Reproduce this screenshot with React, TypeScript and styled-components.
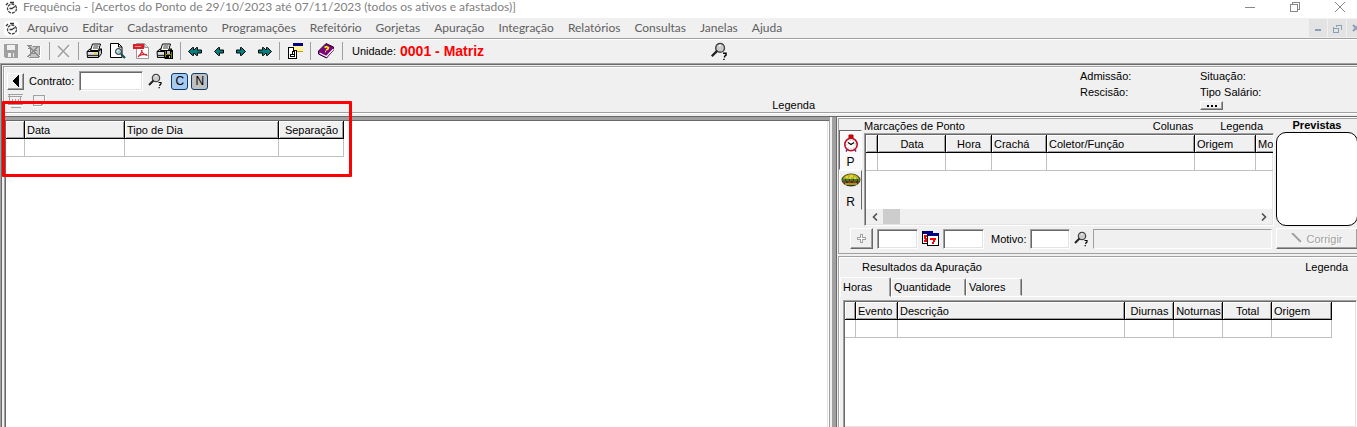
import React from "react";
import styled, { createGlobalStyle, css } from "styled-components";

const face = "#f0f0f0";
const mid = "#a0a0a0";
const dark = "#696969";
const line = "#c0c0c0";

const Global = createGlobalStyle`
  * { box-sizing: border-box; }
  body {
    margin: 0;
    background: ${face};
    color: #000;
    font: 11px/14px "Liberation Sans", Arial, sans-serif;
  }
  button, input { font: inherit; color: inherit; padding: 0; margin: 0; border-radius: 0; }
  svg { display: block; flex: none; }
`;

const Page = styled.div`
  position: relative;
  display: flex;
  flex-direction: column;
  min-height: 100vh;
  overflow: hidden;
`;

const TitleBar = styled.header`
  display: flex;
  align-items: center;
  height: 18px;
  padding: 0 9px 4px 4px;
  gap: 4px;
  background: #fff;
  color: #808080;
  font: 12px/14px Lato, "Noto Sans", sans-serif;
`;

const Title = styled.h1`
  flex: 1;
  margin: 0;
  font: inherit;
  white-space: nowrap;
`;

const WindowButtons = styled.div`
  display: flex;
  gap: 29px;
`;

const PlainButton = styled.button`
  display: flex;
  align-items: center;
  justify-content: center;
  border: 0;
  background: none;
`;

const MenuBar = styled.nav`
  display: flex;
  align-items: center;
  height: 20px;
  padding-left: 4px;
  background: ${face};
  color: #606060;
  font: 12px/18px Lato, "Noto Sans", sans-serif;
`;

const MenuItems = styled.div`
  display: flex;
  flex: 1;
  gap: 14px;
  padding-left: 8px;
`;

const ChildButtons = styled.div`
  display: flex;
  gap: 1px;
  width: 48px;
  overflow: hidden;
`;

const ChildButton = styled(PlainButton)`
  flex: none;
  width: 18px;
  height: 18px;
  background: #e3e3e3;
`;

const ToolBar = styled.div`
  display: flex;
  align-items: center;
  height: 25px;
  border-top: 1px solid ${mid};
  box-shadow: inset 0 1px #fff;
  padding-left: 3px;
  gap: 7px;
`;

const ToolSep = styled.span`
  width: 1px;
  height: 18px;
  background: ${mid};
`;

const Unit = styled.div`
  display: flex;
  align-items: center;
  gap: 4px;
  width: 353px;
  padding-left: 2px;
`;

const UnitName = styled.strong`
  color: #f00;
  font-size: 14px;
`;

const Workspace = styled.main`
  flex: 1;
  display: flex;
  flex-direction: column;
  border-top: 1px solid ${mid};
  border-left: 1px solid ${mid};
  box-shadow: inset 1px 1px ${dark};
  padding: 2px 0 0 2px;
`;

const ContractPanel = styled.section`
  display: flex;
  height: 47px;
  border: 1px solid ${mid};
  border-right: 0;
  box-shadow: inset 1px 1px #fff, 0 1px #fff;
`;

const ContractTools = styled.div`
  flex: 1;
  display: flex;
  justify-content: space-between;
  align-items: flex-end;
  padding-left: 3px;
`;

const ContractRows = styled.div`
  display: flex;
  flex-direction: column;
  height: 100%;
  padding-top: 4px;
  gap: 1px;
`;

const Row = styled.div<{ $gap?: number }>`
  display: flex;
  align-items: center;
  gap: ${(p) => p.$gap ?? 5}px;
`;

const raised = css`
  border: 1px solid;
  border-color: #fff ${dark} ${dark} #fff;
  box-shadow: inset -1px -1px ${mid};
  background: ${face};
`;

const RaisedButton = styled.button<{ $w: number; $h: number }>`
  ${raised}
  display: flex;
  flex: none;
  align-items: center;
  justify-content: center;
  gap: 3px;
  width: ${(p) => p.$w}px;
  height: ${(p) => p.$h}px;
  &:disabled { color: ${mid}; text-shadow: 1px 1px #fff; }
`;

const Field = styled.input<{ $w: number }>`
  width: ${(p) => p.$w}px;
  height: 20px;
  border: 1px solid;
  border-color: ${mid} #fff #fff ${mid};
  box-shadow: inset 1px 1px ${dark}, inset -1px -1px #e3e3e3;
  background: #fff;
  &:disabled { box-shadow: none; background: ${face}; }
`;

const Toggle = styled.button<{ $on?: boolean }>`
  width: 17px;
  height: 17px;
  border: 1px solid #0b3a6b;
  border-radius: 3px;
  background: ${(p) => (p.$on ? "#a6caf0" : "#c0c0c0")};
  font-size: 12px;
  line-height: 14px;
`;

const Toggles = styled.div`
  display: flex;
  gap: 3px;
  padding-left: 3px;
`;

const ContractInfo = styled.dl`
  display: grid;
  grid-template-columns: 120px 1fr;
  grid-auto-rows: 16px;
  align-content: start;
  width: 542px;
  margin: 0;
  padding: 2px 0 0 265px;
`;

const InfoName = styled.dt``;

const InfoMore = styled.dd`
  grid-column: 2;
  margin: 0;
`;

const Split = styled.div`
  flex: 1;
  display: grid;
  grid-template-columns: minmax(0, 1fr) 527px;
  margin: 3px 0 0 -2px;
  border-top: 1px solid ${dark};
`;

const DaysPane = styled.section`
  border: solid;
  border-width: 3px 1px 0 1px;
  border-color: ${mid};
  margin-left: 3px;
  box-shadow: inset 1px 1px ${dark}, inset -1px 0 #fff, inset -2px 0 #e3e3e3;
  padding: 1px 3px 0 1px;
  background: #fff;
`;

const RightPane = styled.section`
  display: flex;
  flex-direction: column;
  margin-left: 2px;
  border-left: 4px solid ${mid};
  box-shadow: inset 1px 0 ${dark}, inset 0 1px #fff;
  min-width: 0;
`;

const Punches = styled.section`
  display: flex;
  flex-direction: column;
  margin-left: 2px;
  margin-top: 1px;
  border: 1px solid ${mid};
  border-right: 0;
  height: 136px;
`;

const PunchArea = styled.div`
  display: flex;
`;

const SideTabs = styled.div`
  width: 25px;
  padding-top: 11px;
`;

const SideTab = styled.button<{ $on?: boolean }>`
  display: flex;
  flex-direction: column;
  align-items: center;
  justify-content: space-between;
  width: 23px;
  height: 40px;
  border: 1px solid;
  border-color: ${(p) => (p.$on ? `${dark} #fff #fff ${dark}` : `#fff ${dark} ${face} #fff`)};
  background: ${(p) => (p.$on ? "#fafafa" : face)};
  padding-top: ${(p) => (p.$on ? 3 : 1)}px;
  font-size: 12px;
`;

const PunchMain = styled.div`
  flex: 1;
  min-width: 0;
`;

const Labels = styled.div`
  display: flex;
  gap: 27px;
  height: 14px;
  padding-right: 11px;
`;

const Grow = styled.span`
  flex: 1;
`;

const GridFrame = styled.div`
  display: flex;
  flex-direction: column;
  overflow: hidden;
  border: 1px solid;
  border-color: ${mid} #fff #fff ${mid};
  box-shadow: inset 1px 1px ${dark}, inset -1px -1px #e3e3e3;
  padding: 1px;
  background: #fff;
`;

const PunchGrid = styled(GridFrame)`
  height: 93px;
`;

const Table = styled.table<{ $w: number }>`
  width: ${(p) => p.$w}px;
  table-layout: fixed;
  border-collapse: separate;
  border-spacing: 0;
`;

const Head = styled.th<{ $align?: string }>`
  height: 18px;
  padding: 0 1px 0 2px;
  border-right: 1px solid #000;
  border-bottom: 1px solid #000;
  box-shadow: inset 1px 1px #fff, inset -1px -1px ${mid};
  background: ${face};
  font-weight: normal;
  text-align: ${(p) => p.$align ?? "left"};
  white-space: nowrap;
`;

const Cell = styled.td`
  height: 18px;
  padding: 0;
  border-right: 1px solid ${line};
  border-bottom: 1px solid ${line};
`;

const ScrollBar = styled.div`
  display: flex;
  align-items: center;
  height: 15px;
  margin-top: auto;
  background: ${face};
`;

const ScrollButton = styled(PlainButton)`
  width: 17px;
  height: 15px;
`;

const Thumb = styled.div`
  width: 17px;
  height: 15px;
  margin-right: auto;
  background: #cdcdcd;
`;

const Planned = styled.div`
  width: 82px;
  margin: 0 -1px 0 2px;
  font-weight: bold;
  line-height: 13px;
  text-align: center;
`;

const PlannedBox = styled.div`
  height: 94px;
  border: 1px solid #000;
  border-radius: 10px;
  background: #fff;
`;

const PunchForm = styled.form`
  display: flex;
  align-items: center;
  gap: 4px;
  padding: 2px 0 0 11px;
  margin-right: -1px;
`;

const Reason = styled.label`
  display: flex;
  align-items: center;
  gap: 4px;
  padding-left: 3px;
`;

const ReasonText = styled(Field)`
  flex: 1;
  min-width: 0;
`;

const Results = styled.section`
  flex: 1;
  display: flex;
  flex-direction: column;
  margin: 2px 0 0 2px;
  border: 1px solid ${mid};
  border-width: 1px 0 0 1px;
  box-shadow: inset 1px 1px #fff;
`;

const ResultLabels = styled.div`
  display: flex;
  justify-content: space-between;
  padding: 3px 9px 1px 23px;
`;

const TabList = styled.div`
  display: flex;
  align-items: flex-end;
  height: 22px;
  margin-left: 1px;
  border-bottom: 1px solid #fff;
`;

const Tab = styled.button<{ $on?: boolean; $w: number }>`
  width: ${(p) => p.$w}px;
  height: ${(p) => (p.$on ? 20 : 18)}px;
  margin-bottom: ${(p) => (p.$on ? -1 : 0)}px;
  padding: 0 0 ${(p) => (p.$on ? 1 : 0)}px 2px;
  border: 1px solid;
  border-color: #fff ${dark} ${face} #fff;
  border-radius: 2px 2px 0 0;
  box-shadow: inset -1px 0 ${mid};
  background: ${face};
  text-align: left;
`;

const ResultGrid = styled(GridFrame)`
  flex: 1;
  margin: 3px 0 0 4px;
  border-bottom: 0;
`;

const Highlight = styled.div`
  position: absolute;
  left: 2px;
  top: 101px;
  width: 350px;
  height: 76px;
  border: 3px solid #f00;
  border-radius: 1px;
  pointer-events: none;
`;

function Icon({ w = 16, h = 16, children }: { w?: number; h?: number; children: React.ReactNode }) {
  return (
    <svg width={w} height={h} viewBox={`0 0 ${w} ${h}`} fill="none" shapeRendering="crispEdges" aria-hidden="true">
      {children}
    </svg>
  );
}

const AppIcon = () => (
  <svg width="15" height="15" viewBox="0 0 15 15" fill="none" aria-hidden="true">
    <rect width="15" height="15" rx="4" fill="#fff" />
    <circle cx="8" cy="8.500" r="4.500" stroke="#444" strokeWidth="1.300" strokeDasharray="3 1" />
    <path d="M2 5l2-2M6 2.500h4M8 8.500l3-2M5.500 8.500h3" stroke="#333" strokeWidth="1.300" />
  </svg>
);

const Save = () => (
  <Icon>
    <path d="M1 1h14v14H2l-1-1z" fill={mid} />
    <path d="M4 2h8v5H4z" fill={face} />
    <path d="M5 10h3v4H5zM10 10h1v4h-1z" fill={face} />
  </Icon>
);

const Discard = () => (
  <Icon>
    <path d="M4 3h9v11H4z" fill="#c4c4c4" />
    <path d="M1 2h5M2 5h3M3 14h10M13 3v9M7 3h4M6 7h5M5 10h5M4 4v9" stroke="#8d8d8d" />
    <path d="M2 2l11 12M12 3L2 14" stroke="#8d8d8d" strokeWidth="1.500" />
    <path d="M14 4v11H5" stroke="#fff" />
  </Icon>
);

const Delete = () => (
  <svg width="14" height="14" viewBox="0 0 14 14" fill="none" aria-hidden="true">
    <path d="M2 3l11 11M13 2L3 14" stroke="#fff" />
    <path d="M1 2l11 11M12 1L1 13" stroke={mid} strokeWidth="1.500" />
  </svg>
);

const Printer = ({ disk }: { disk?: boolean }) => (
  <svg width="17" height="16" viewBox="0 0 17 16" fill="none" aria-hidden="true">
    <path d="M1 8.500L4 6h11.500v4.500l-3 4h-11z" fill="#c0c0c0" stroke="#000" />
    <path d="M6.500 1h8l-2 6.500h-8z" fill="#fff" stroke="#000" />
    <path d="M7.500 3h5M7 5h5" stroke="#000" strokeWidth=".8" />
    <path d="M1 8.500h11.500M12.500 14V8.500l3-2.500" stroke="#000" />
    <path d="M2 10h10" stroke="#fff" />
    <path d="M2 12.500h10" stroke="#333" />
    <path d="M8 10.500h3" stroke="#e0d000" strokeWidth="1.500" />
    {disk && (
      <>
        <path d="M8 7h9v9H9l-1-1z" fill="#000" />
        <path d="M9 8h1v6H9zM15 9h1v6h-1zM10 11h5v1h-5z" fill="#808000" />
        <path d="M11 8h3v3h-3zM13 13h1v2h-1z" fill="#c0c0c0" />
      </>
    )}
  </svg>
);

const Preview = () => (
  <svg width="16" height="16" viewBox="0 0 16 16" fill="none" aria-hidden="true">
    <path d="M.5.5h8l3.500 3.500v10.500H.5z" fill="#fff" stroke="#000" />
    <path d="M8.500.5V4H12" stroke="#000" />
    <circle cx="8.500" cy="8.500" r="3" fill="#a0ccd4" stroke="#222" />
    <path d="M7 8.500c0-1 .5-1.500 1.500-1.500" stroke="#fff" />
    <path d="M11 11l4 4" stroke="#104858" strokeWidth="2.200" />
  </svg>
);

const Pdf = () => (
  <svg width="16" height="16" viewBox="0 0 16 16" fill="none" aria-hidden="true">
    <path d="M3.500.5h8l4 4v11h-12z" fill="#fff" stroke="#999" />
    <path d="M11.500.5v4h4" fill="#ddd" stroke="#999" />
    <path d="M0 1h11v5H0z" fill="#d6202a" />
    <path d="M2 3.500h6" stroke="#f09090" />
    <path d="M5 14c2-2 4-4 4-7M8.500 7c.5 3 2.500 5 6 5.500M5.500 13c2-1.500 5-2 8.500-1.500" stroke="#d6202a" strokeWidth="1.200" />
  </svg>
);

const Arrow = ({ right, twice }: { right?: boolean; twice?: boolean }) => (
  <svg width={twice ? 14 : 10} height="11" viewBox={twice ? "0 0 14 11" : "0 0 10 11"} aria-hidden="true">
    <g transform={right ? `translate(${twice ? 14 : 10} 0) scale(-1 1)` : undefined} fill="#008080" stroke="#000">
      {twice && <path d="M4.500 5.500l4-4h1v2.500h4v3h-4v2.500h-1z" />}
      <path d={twice ? "M.5 5.500l4-4h1v8h-1z" : "M.5 5.500l4-4h1v2.500h4v3h-4v2.500h-1z"} />
      {twice && <path d="M5 4h2v3H5z" stroke="none" />}
    </g>
  </svg>
);

const Forms = () => (
  <Icon>
    <path d="M6 1h10v8H6z" fill="#fff3a0" />
    <path d="M6 0h10v3H6z" fill="#000080" />
    <path d="M7 8h9v1H7z" fill="#c8a000" />
    <path d="M1 4h6v3h3v9H1z" fill="#000" />
    <path d="M2 5h4v3h3v7H2z" fill="#fff" />
    <path d="M5 8h3v4H5zM3 11h5v3H3z" fill="#000" />
    <path d="M6 9h1v2H6zM4 12h3v1H4z" fill="#fff" />
  </Icon>
);

const Book = () => (
  <svg width="17" height="16" viewBox="0 0 17 16" aria-hidden="true">
    <path d="M8 .5L15.500 4v3L8.500 15 .5 11V8z" fill="#800080" stroke="#2a002a" />
    <path d="M1.500 10l7 3.500 7-7.500" stroke="#fff" strokeWidth="1.200" fill="none" />
    <path d="M6.500 4.500l2-1 2 1-.5 1.500-2 1M7 8.500h1" stroke="#ff0" strokeWidth="1.400" fill="none" />
  </svg>
);

const Lookup = ({ big }: { big?: boolean }) => (
  <svg width={big ? 19 : 15} height={big ? 19 : 16} viewBox="0 0 15 16" fill="none" aria-hidden="true">
    <circle cx="8" cy="5" r="3.700" fill="#ccc" stroke="#444" strokeWidth="1.200" />
    <path d="M7 3.500l1.500-1" stroke="#fff" strokeWidth="1.200" />
    <path d="M5.500 7.500L1 12" stroke="#222" strokeWidth="2" />
    <path d="M10.500 9.500h2.500v1.500l-1.200 1v1M11.200 14v1.200" stroke="#000" strokeWidth="1.200" />
  </svg>
);

const Keyboard = () => (
  <Icon>
    <path d="M1 2.500h15M1 4.500h14M1 12.500h15M2.500 2v12M5.500 7v5M8.500 7v5M11.500 7v5M13.500 5v7M3 9.500h2M4 15h10" stroke={mid} />
    <path d="M2 13.500h14" stroke="#fff" />
  </Icon>
);

const Note = () => (
  <Icon w={13} h={13}>
    <path d="M.5 1.500h11v7l-3 3h-8zM8.500 11V8.500H11" stroke={mid} />
    <path d="M1 12.500h9M12.500 2v8" stroke="#fff" />
  </Icon>
);

const Clock = () => (
  <svg width="16" height="19" viewBox="0 0 16 19" fill="none" aria-hidden="true">
    <path d="M6 1h4v3H6z" fill="#d00" stroke="#b00000" />
    <circle cx="8" cy="10.500" r="6.200" fill="#fff" stroke="#c01020" strokeWidth="1.600" />
    <circle cx="8" cy="10.500" r="4.200" stroke="#88a0a0" strokeDasharray="1 2" />
    <path d="M5 8.500l3 2 3-2" stroke="#000" strokeWidth="1.200" />
    <path d="M4 16l-1 1.500M12 16l1 1.500" stroke="#602080" strokeWidth="1.500" />
  </svg>
);

const Burger = () => (
  <svg width="20" height="16" viewBox="0 0 20 16" fill="none" aria-hidden="true">
    <ellipse cx="10" cy="8" rx="9.500" ry="6.500" fill="#383818" />
    <path d="M2 7c1-6.500 15-6.500 16 0z" fill="#c0b020" />
    <path d="M5 5h2M9 4h3M13 6h2M8 6h2" stroke="#ffff60" />
    <path d="M1 8h18" stroke="#30a030" strokeWidth="1.500" strokeDasharray="3 1" />
    <path d="M2 10h16" stroke="#c03020" strokeWidth="1.500" strokeDasharray="3 2" />
    <path d="M4 12h12" stroke="#c0b830" strokeWidth="1.500" />
  </svg>
);

const Calendar = () => (
  <Icon w={17} h={17}>
    <path d="M.5 1.500h10v12H.5z" fill="#fff" stroke="#000" />
    <path d="M1 1h10v3H1z" fill="#000080" />
    <path d="M2 5h3v2H4v1h1v4H2v-2h1V9H2z" fill="#f00" />
    <path d="M5.500 3.500h11v12h-11z" fill="#fff" stroke="#000" />
    <path d="M5 3h12v3H5z" fill="#000080" />
    <path d="M8 8h6v2h-1v2h-1v2h-2v-2h1v-2H8z" fill="#f00" />
  </Icon>
);

type Column = { name: string; w: number; align?: string };

function DataTable({ columns, label }: { columns: Column[]; label: string }) {
  return (
    <Table aria-label={label} $w={columns.reduce((sum, c) => sum + c.w, 0)}>
      <colgroup>
        {columns.map((c, i) => <col key={i} width={c.w} />)}
      </colgroup>
      <thead>
        <tr>{columns.map((c, i) => <Head key={i} scope="col" $align={c.align}>{c.name}</Head>)}</tr>
      </thead>
      <tbody>
        <tr>{columns.map((_, i) => <Cell key={i} />)}</tr>
      </tbody>
    </Table>
  );
}

const menus = ["Arquivo", "Editar", "Cadastramento", "Programações", "Refeitório", "Gorjetas", "Apuração", "Integração", "Relatórios", "Consultas", "Janelas", "Ajuda"];

const dayColumns: Column[] = [
  { name: "", w: 19 },
  { name: "Data", w: 100 },
  { name: "Tipo de Dia", w: 154 },
  { name: "Separação", w: 65, align: "center" },
];

const punchColumns: Column[] = [
  { name: "", w: 12 },
  { name: "Data", w: 68, align: "center" },
  { name: "Hora", w: 46, align: "center" },
  { name: "Crachá", w: 55 },
  { name: "Coletor/Função", w: 148 },
  { name: "Origem", w: 61 },
  { name: "Mo", w: 80 },
];

const resultColumns: Column[] = [
  { name: "", w: 11 },
  { name: "Evento", w: 42 },
  { name: "Descrição", w: 227 },
  { name: "Diurnas", w: 49, align: "center" },
  { name: "Noturnas", w: 49, align: "center" },
  { name: "Total", w: 49, align: "center" },
  { name: "Origem", w: 60 },
];

const Tool = ({ label, off, children }: { label: string; off?: boolean; children: React.ReactNode }) => (
  <PlainButton type="button" aria-label={label} disabled={off}>{children}</PlainButton>
);

export default function App() {
  return (
    <Page>
      <Global />
      <TitleBar>
        <AppIcon />
        <Title>Frequência - [Acertos do Ponto de 29/10/2023 até 07/11/2023 (todos os ativos e afastados)]</Title>
        <WindowButtons>
          <Tool label="Minimizar"><Icon w={16} h={12}><path d="M3 6.500h10" stroke="#888" /></Icon></Tool>
          <Tool label="Restaurar"><Icon w={16} h={12}><path d="M3.500 3.500h7v7h-7zM5.500 3V1.500h7v7H11" stroke="#888" /></Icon></Tool>
          <Tool label="Fechar"><svg width="16" height="12" viewBox="0 0 16 12"><path d="M3 1l10 10M13 1L3 11" stroke="#888" /></svg></Tool>
        </WindowButtons>
      </TitleBar>
      <MenuBar>
        <AppIcon />
        <MenuItems>
          {menus.map((m) => <PlainButton type="button" key={m}>{m}</PlainButton>)}
        </MenuItems>
        <ChildButtons>
          <ChildButton type="button" aria-label="Minimizar janela"><Icon w={8} h={8}><path d="M1 6h6" stroke="#8ba0b5" strokeWidth="2" /></Icon></ChildButton>
          <ChildButton type="button" aria-label="Restaurar janela"><Icon w={9} h={9}><path d="M3 1h6M8.500 1v5M3.500 1v2M1 4h5M.5 3v5.500h5V4" stroke="#8ba0b5" /></Icon></ChildButton>
          <ChildButton type="button" aria-label="Fechar janela"><svg width="8" height="8" viewBox="0 0 8 8"><path d="M1 1l6 6M7 1L1 7" stroke="#8ba0b5" strokeWidth="2" /></svg></ChildButton>
        </ChildButtons>
      </MenuBar>
      <ToolBar>
        <Tool label="Gravar" off><Save /></Tool>
        <Tool label="Cancelar" off><Discard /></Tool>
        <ToolSep />
        <Tool label="Excluir" off><Delete /></Tool>
        <ToolSep />
        <Tool label="Imprimir"><Printer /></Tool>
        <Tool label="Visualizar"><Preview /></Tool>
        <Tool label="Gerar PDF"><Pdf /></Tool>
        <Tool label="Salvar impressão"><Printer disk /></Tool>
        <ToolSep />
        <Row $gap={12}>
          <Tool label="Primeiro"><Arrow twice /></Tool>
          <Tool label="Anterior"><Arrow /></Tool>
          <Tool label="Próximo"><Arrow right /></Tool>
          <Tool label="Último"><Arrow right twice /></Tool>
        </Row>
        <ToolSep />
        <Tool label="Formulários"><Forms /></Tool>
        <ToolSep />
        <Tool label="Ajuda"><Book /></Tool>
        <ToolSep />
        <Unit><span>Unidade:</span><UnitName>0001 - Matriz</UnitName></Unit>
        <Tool label="Pesquisar unidade"><Lookup big /></Tool>
      </ToolBar>
      <Workspace>
        <ContractPanel>
          <ContractTools>
            <ContractRows>
              <Row>
                <RaisedButton type="button" $w={17} $h={17} aria-label="Voltar">
                  <Icon w={7} h={12}><path d="M7 0v12L0 6z" fill="#000" /></Icon>
                </RaisedButton>
                <label htmlFor="contrato">Contrato:</label>
                <Field id="contrato" $w={64} />
                <Tool label="Pesquisar contrato"><Lookup /></Tool>
                <Toggles>
                  <Toggle type="button" $on>C</Toggle>
                  <Toggle type="button">N</Toggle>
                </Toggles>
              </Row>
              <Row $gap={10}>
                <Tool label="Digitar" off><Keyboard /></Tool>
                <Tool label="Anotação" off><Note /></Tool>
              </Row>
            </ContractRows>
            <span>Legenda</span>
          </ContractTools>
          <ContractInfo>
            <InfoName>Admissão:</InfoName>
            <InfoName>Situação:</InfoName>
            <InfoName>Rescisão:</InfoName>
            <InfoName>Tipo Salário:</InfoName>
            <InfoMore>
              <RaisedButton type="button" $w={23} $h={9} aria-label="Mais">
                <Icon w={10} h={2}><path d="M0 1h2M4 1h2M8 1h2" stroke="#000" strokeWidth="2" /></Icon>
              </RaisedButton>
            </InfoMore>
          </ContractInfo>
        </ContractPanel>
        <Split>
          <DaysPane>
            <DataTable columns={dayColumns} label="Dias" />
          </DaysPane>
          <RightPane>
            <Punches>
              <PunchArea>
                <SideTabs>
                  <SideTab type="button" $on><Clock />P</SideTab>
                  <SideTab type="button"><Burger />R</SideTab>
                </SideTabs>
                <PunchMain>
                  <Labels>
                    <span>Marcações de Ponto</span>
                    <Grow />
                    <span>Colunas</span>
                    <span>Legenda</span>
                  </Labels>
                  <PunchGrid>
                    <DataTable columns={punchColumns} label="Marcações de Ponto" />
                    <ScrollBar>
                      <ScrollButton type="button" aria-label="Rolar à esquerda"><svg width="6" height="8" viewBox="0 0 6 8" fill="none"><path d="M5 .5L1.500 4 5 7.500" stroke="#505050" strokeWidth="1.600" /></svg></ScrollButton>
                      <Thumb />
                      <ScrollButton type="button" aria-label="Rolar à direita"><svg width="6" height="8" viewBox="0 0 6 8" fill="none"><path d="M1 .5L4.500 4 1 7.500" stroke="#505050" strokeWidth="1.600" /></svg></ScrollButton>
                    </ScrollBar>
                  </PunchGrid>
                </PunchMain>
                <Planned>
                  Previstas
                  <PlannedBox />
                </Planned>
              </PunchArea>
              <PunchForm>
                <RaisedButton type="button" $w={23} $h={21} disabled aria-label="Adicionar">
                  <Icon w={10} h={10}><path d="M3.500.5h2v3h3v2h-3v3h-2v-3h-3v-2h3z" fill="#fff" stroke={mid} /></Icon>
                </RaisedButton>
                <Field $w={41} aria-label="Data" />
                <Tool label="Calendário"><Calendar /></Tool>
                <Field $w={41} aria-label="Hora" />
                <Reason>Motivo:<Field $w={40} /></Reason>
                <Tool label="Pesquisar motivo"><Lookup /></Tool>
                <ReasonText $w={176} disabled aria-label="Descrição do motivo" />
                <RaisedButton type="button" $w={82} $h={21} disabled>
                  <svg width="12" height="11" viewBox="0 0 12 11"><path d="M2 1l9 9" stroke="#fff" strokeWidth="2" /><path d="M1 0l9 9" stroke={mid} strokeWidth="2" /></svg>
                  Corrigir
                </RaisedButton>
              </PunchForm>
            </Punches>
            <Results>
              <ResultLabels><span>Resultados da Apuração</span><span>Legenda</span></ResultLabels>
              <TabList role="tablist">
                <Tab role="tab" type="button" aria-selected $on $w={51}>Horas</Tab>
                <Tab role="tab" type="button" $w={75}>Quantidade</Tab>
                <Tab role="tab" type="button" $w={56}>Valores</Tab>
              </TabList>
              <ResultGrid>
                <DataTable columns={resultColumns} label="Resultados da Apuração" />
              </ResultGrid>
            </Results>
          </RightPane>
        </Split>
      </Workspace>
      <Highlight />
    </Page>
  );
}
